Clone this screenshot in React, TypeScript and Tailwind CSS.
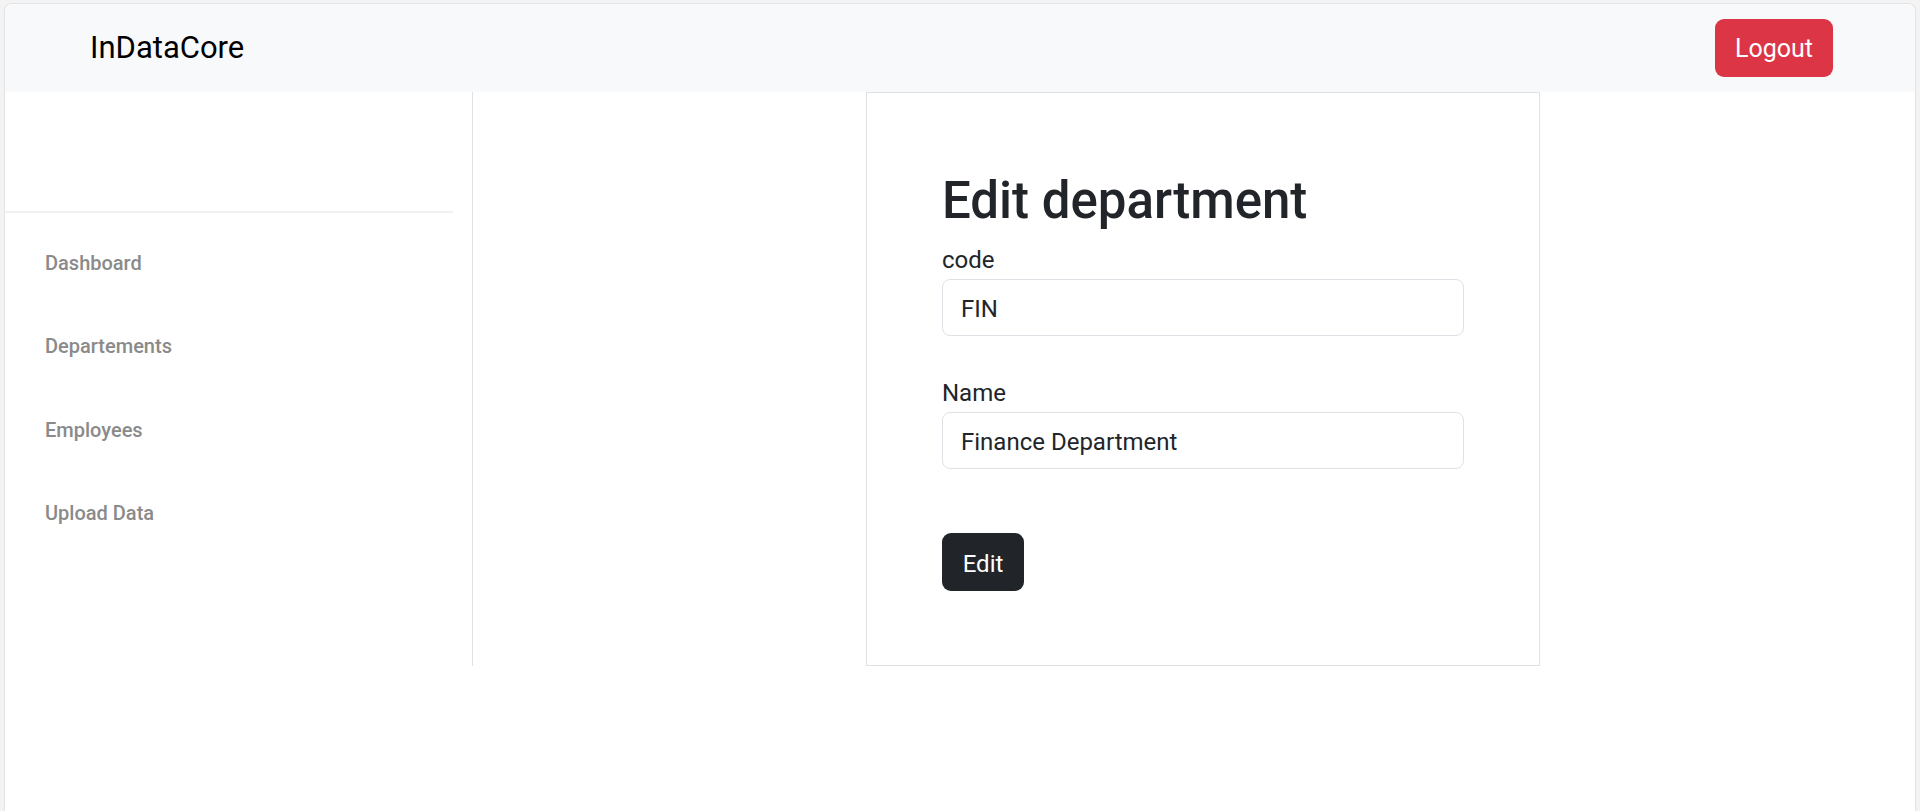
import React from 'react';

const navItems = ['Dashboard', 'Departements', 'Employees', 'Upload Data'];

export default function App() {
  return (
    <div className="min-h-screen bg-[#f3f3f3] pt-[3px] px-[4px] flex flex-col font-[Roboto,sans-serif]">
      <div className="flex-1 min-h-[808px] bg-white border border-b-0 border-[#e3e3e3] rounded-t-[8px] overflow-hidden">
        {/* Top bar */}
        <nav className="h-[88px] bg-[#f8f9fa] flex items-center justify-between pl-[85px] pr-[82px]">
          <span className="text-[31px] text-black">InDataCore</span>
          <button className="w-[118px] h-[58px] pt-[2px] rounded-[9px] bg-[#dc3545] text-white text-[25px]">
            Logout
          </button>
        </nav>

        <div className="flex">
          {/* Sidebar */}
          <aside className="w-[468px] border-r border-[#dee2e6]">
            <div className="h-[119px]" />
            <div className="h-[2px] w-[448px] bg-[#f1f1f1]" />
            <ul className="pt-[8px]">
              {navItems.map((item) => (
                <li key={item} className="h-[83.5px] flex items-center pl-[40px]">
                  <a href="#" className="text-[20px] font-medium text-[#8a8a8a]">
                    {item}
                  </a>
                </li>
              ))}
            </ul>
          </aside>

          {/* Main */}
          <main className="flex-1 pl-[393px]">
            <div className="w-[674px] h-[574px] border border-[#dee2e6] px-[75px] pt-[78px] text-[#212529]">
              <h1 className="text-[51px] leading-[60px] font-medium mb-[15px]">Edit department</h1>
              <form className="flex flex-col">
                <label className="text-[24px] leading-[29px]">code</label>
                <input
                  defaultValue="FIN"
                  className="mt-[4px] h-[57px] w-full border border-[#dee2e6] rounded-[8px] px-[18px] pt-[3px] text-[24px] text-[#212529] outline-none"
                />
                <label className="mt-[43px] text-[24px] leading-[29px]">Name</label>
                <input
                  defaultValue="Finance Department"
                  className="mt-[4px] h-[57px] w-full border border-[#dee2e6] rounded-[8px] px-[18px] pt-[3px] text-[24px] text-[#212529] outline-none"
                />
                <div className="mt-[64px]">
                  <button type="button" className="w-[82px] h-[58px] pt-[3px] rounded-[9px] bg-[#212529] text-white text-[24px]">
                    Edit
                  </button>
                </div>
              </form>
            </div>
          </main>
        </div>
      </div>
    </div>
  );
}
